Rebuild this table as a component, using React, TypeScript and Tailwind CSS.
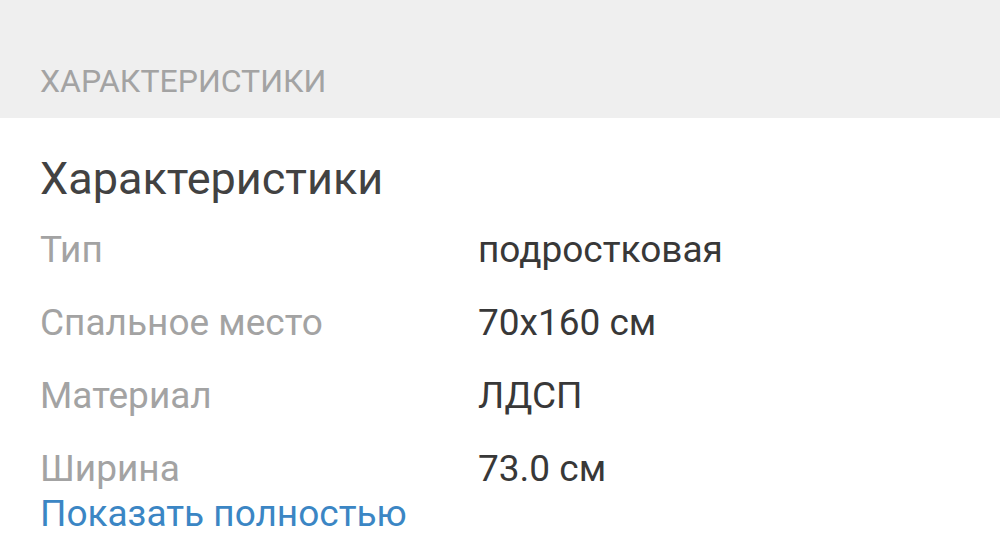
const rows = [
  { label: 'Тип', value: 'подростковая' },
  { label: 'Спальное место', value: '70x160 см' },
  { label: 'Материал', value: 'ЛДСП' },
  { label: 'Ширина', value: '73.0 см' },
];

export default function App() {
  return (
    <div className="w-[1000px] h-[558px] bg-white overflow-hidden" style={{ fontFamily: 'Roboto, "Noto Sans", sans-serif' }}>
      <div className="h-[118px] bg-[#efefef] flex items-end px-[40px] pb-[21px]">
        <span className="text-[32px] leading-none text-[#a3a3a3]">ХАРАКТЕРИСТИКИ</span>
      </div>
      <div className="px-[40px] pt-[38px]">
        <h2 className="text-[45px] leading-none text-[#424242]">Характеристики</h2>
        <div className="mt-[12px] grid grid-cols-[438px_1fr]">
          {rows.map((r) => (
            <div key={r.label} className="contents">
              <div className="text-[37px] leading-[73px] text-[#a3a3a3]">{r.label}</div>
              <div className="text-[37px] leading-[73px] text-[#383838]">{r.value}</div>
            </div>
          ))}
        </div>
        <a className="block -mt-[10px] text-[37px] leading-none text-[#3b86c4]">Показать полностью</a>
      </div>
    </div>
  );
}
